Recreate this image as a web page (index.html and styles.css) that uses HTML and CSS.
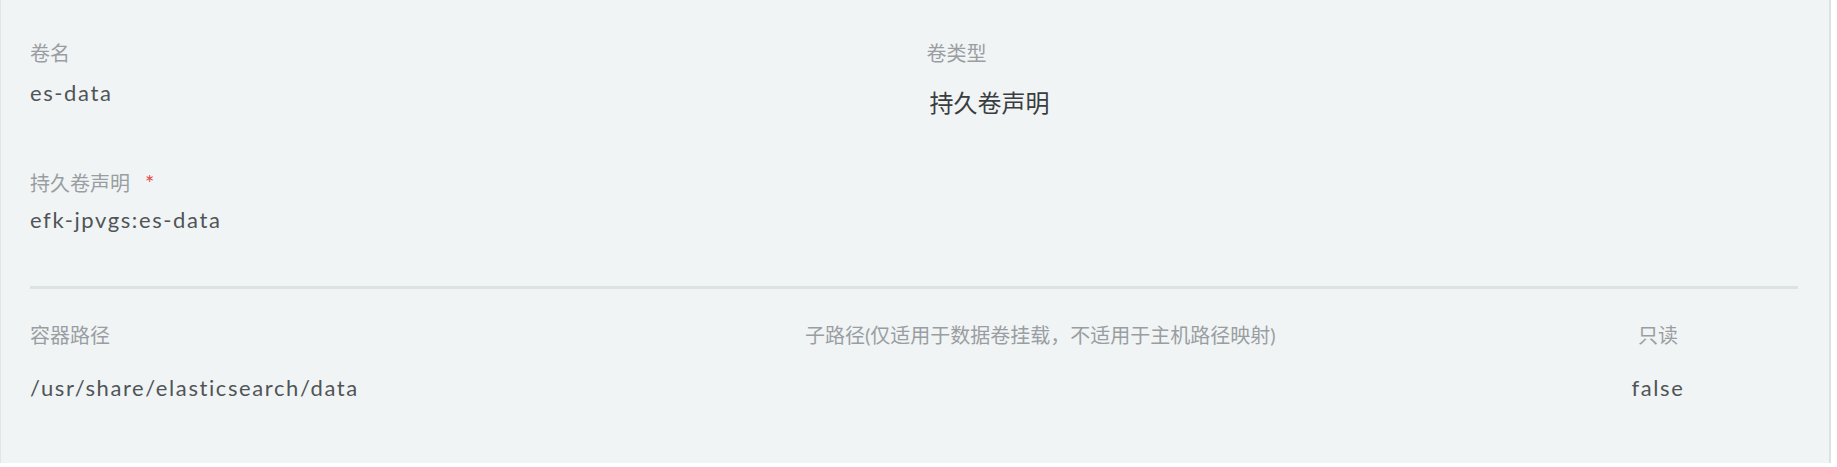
FILE: index.html
```html
<!DOCTYPE html>
<html lang="zh-CN">
<head>
<meta charset="utf-8">
<title>卷</title>
<link rel="stylesheet" href="styles.css">
</head>
<body>
<section class="panel">
  <div class="row row-two">
    <div class="field">
      <div class="label">卷名</div>
      <div class="value">es-data</div>
    </div>
    <div class="field">
      <div class="label">卷类型</div>
      <div class="value value-lg">持久卷声明</div>
    </div>
  </div>
  <div class="field field-claim">
    <div class="label">持久卷声明<span class="req">*</span></div>
    <div class="value value-claim">efk-jpvgs:es-data</div>
  </div>
  <div class="divider"></div>
  <div class="row row-three">
    <div class="field">
      <div class="label">容器路径</div>
      <div class="value value-mount">/usr/share/elasticsearch/data</div>
    </div>
    <div class="field">
      <div class="label">子路径(仅适用于数据卷挂载，不适用于主机路径映射)</div>
      <div class="value value-mount"></div>
    </div>
    <div class="field field-center">
      <div class="label">只读</div>
      <div class="value value-mount">false</div>
    </div>
  </div>
</section>
</body>
</html>
```
FILE: styles.css
```css
html, body {
  margin: 0;
  background: #ffffff;
}
body {
  font-family: "Lato", "Noto Sans CJK SC", sans-serif;
}
.panel {
  box-sizing: border-box;
  width: 1831px;
  background: #f1f4f5;
  border-left: 1px solid #e1e6e6;
  border-right: 2px solid #dce2e2;
  padding: 41px 31px 62px 29px;
}
.row {
  display: grid;
}
.row-two {
  grid-template-columns: 1fr 1fr;
  column-gap: 25px;
}
.row-three {
  grid-template-columns: 775px 713px 280px;
  margin-top: 34px;
}
.label {
  font-size: 20px;
  line-height: 24px;
  color: #999ea2;
  white-space: nowrap;
}
.req {
  color: #e8454a;
  font-size: 22px;
  margin-left: 15px;
}
.value {
  font-size: 22px;
  line-height: 26px;
  letter-spacing: 1.6px;
  color: #505457;
  margin-top: 15px;
  min-height: 26px;
}
.value-lg {
  font-size: 24px;
  line-height: 29px;
  letter-spacing: 0;
  color: #3a3d40;
  margin-top: 23px;
  padding-left: 3px;
}
.field-claim {
  margin-top: 54px;
}
.value-claim {
  margin-top: 12px;
}
.divider {
  height: 3px;
  background: #dce3e3;
  margin-top: 53px;
}
.value-mount {
  margin-top: 28px;
}
.field-center {
  text-align: center;
}
```
